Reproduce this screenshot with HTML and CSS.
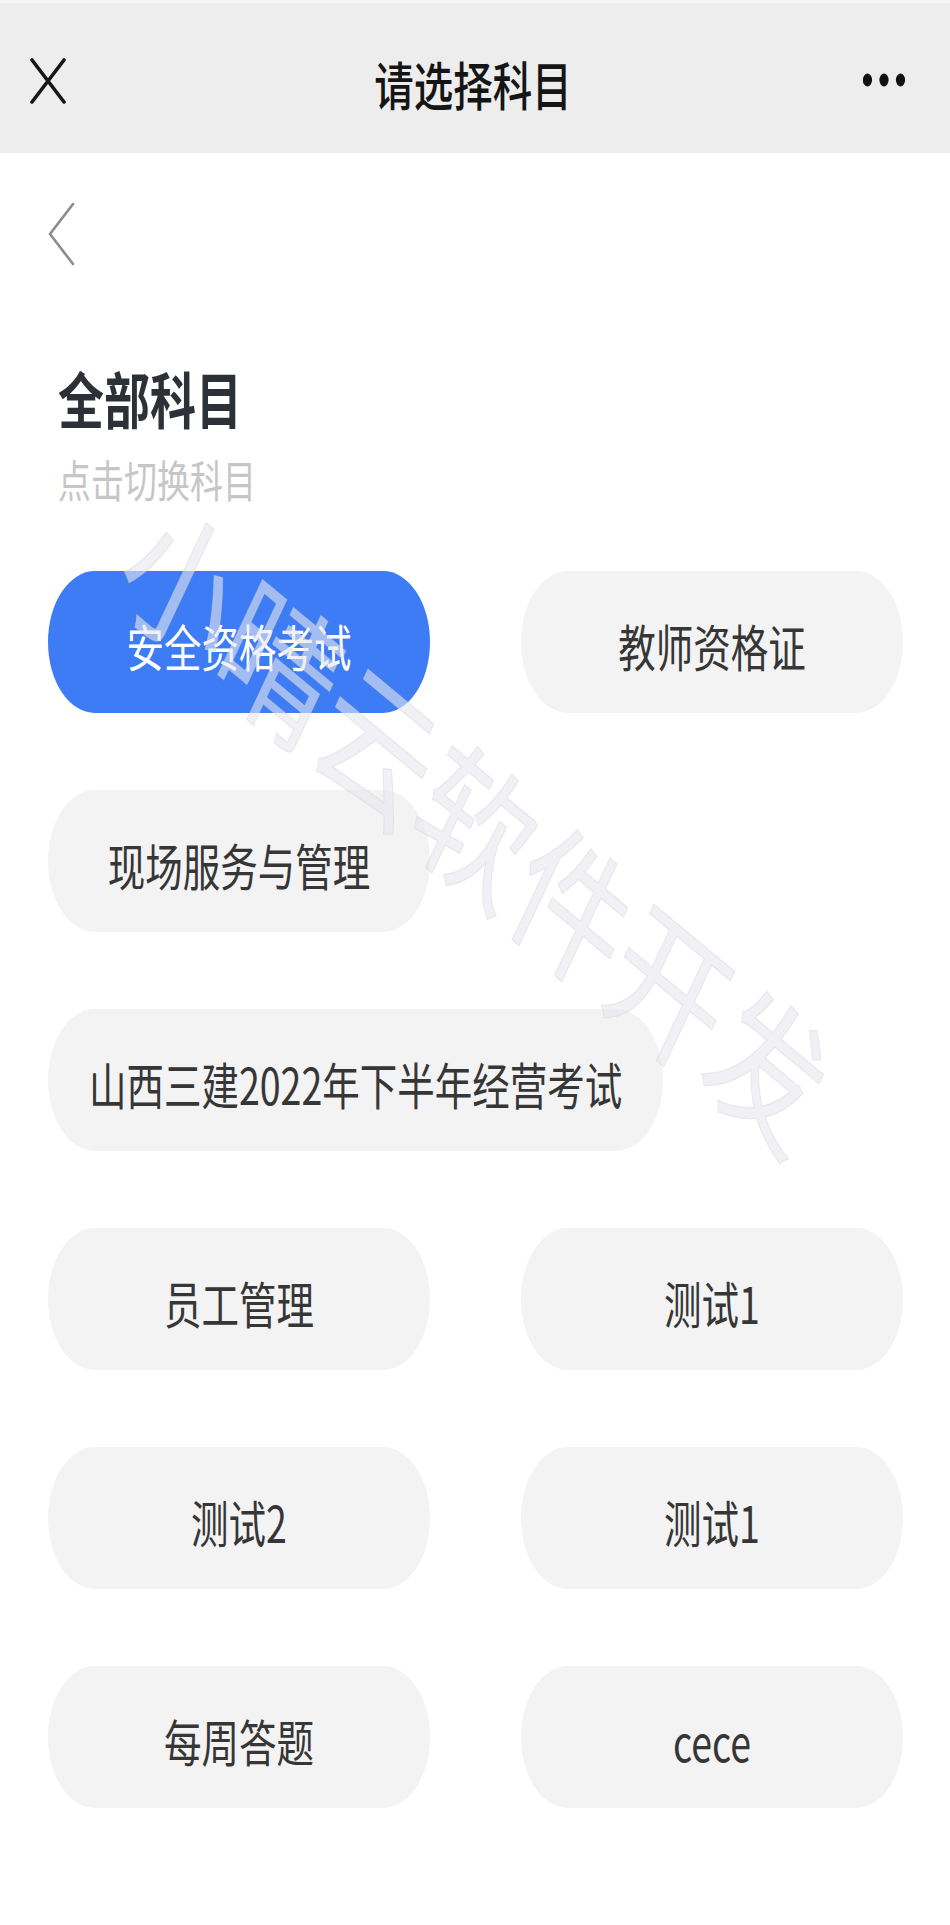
FILE: index.html
```html
<!DOCTYPE html>
<html lang="zh-CN">
<head>
<meta charset="utf-8">
<title>请选择科目</title>
<link rel="stylesheet" href="styles.css">
</head>
<body>
<header class="topbar">
  <svg class="close-icon" width="36" height="46" viewBox="0 0 36 46">
    <path d="M2 2 L34 44 M34 2 L2 44" stroke="#161616" stroke-width="3.6" stroke-linecap="round" fill="none"/>
  </svg>
  <div class="topbar-title"><span class="tall">请选择科目</span></div>
  <svg class="more-icon" width="46" height="16" viewBox="0 0 46 16">
    <ellipse cx="4.5" cy="8" rx="4.6" ry="6.5" fill="#111"/>
    <ellipse cx="21" cy="8" rx="4.6" ry="6.5" fill="#111"/>
    <ellipse cx="37.5" cy="8" rx="4.6" ry="6.5" fill="#111"/>
  </svg>
</header>

<main class="content">
  <div class="back-row">
    <svg class="back-icon" width="28" height="64" viewBox="0 0 28 64">
      <path d="M25 2 L2 32 L25 62" stroke="#8c8c8c" stroke-width="2.6" stroke-linecap="round" stroke-linejoin="round" fill="none"/>
    </svg>
  </div>

  <h1 class="section-title"><span class="tall">全部科目</span></h1>
  <p class="section-sub"><span class="tall">点击切换科目</span></p>

  <div class="subjects">
    <div class="chip chip-active"><span class="tall">安全资格考试</span></div>
    <div class="chip"><span class="tall">教师资格证</span></div>
    <div class="chip"><span class="tall">现场服务与管理</span></div>
    <div class="chip"><span class="tall">山西三建2022年下半年经营考试</span></div>
    <div class="chip"><span class="tall">员工管理</span></div>
    <div class="chip"><span class="tall">测试1</span></div>
    <div class="chip"><span class="tall">测试2</span></div>
    <div class="chip"><span class="tall">测试1</span></div>
    <div class="chip"><span class="tall">每周答题</span></div>
    <div class="chip"><span class="tall">cece</span></div>
  </div>
</main>

<div class="watermark-anchor">
  <div class="watermark">小晴云软件开发</div>
</div>
</body>
</html>
```

FILE: styles.css
```css
html, body {
  margin: 0;
  padding: 0;
  background: #ffffff;
}

body {
  position: relative;
  width: 950px;
  min-height: 1925px;
  font-family: "Noto Sans CJK SC", "Noto Sans", "Liberation Sans", sans-serif;
  color: #333333;
  overflow: hidden;
}

.tall {
  display: inline-block;
  transform: scaleY(1.33);
}

/* top bar */
.topbar {
  box-sizing: border-box;
  height: 153px;
  border-top: 3px solid #f6f6f6;
  background: #ededed;
  display: grid;
  grid-template-columns: 1fr auto 1fr;
  align-items: center;
  padding-top: 4px;
}

.close-icon {
  margin-left: 30px;
  margin-top: 2px;
  justify-self: start;
}

.topbar-title {
  font-size: 39.5px;
  line-height: 40px;
  font-weight: 500;
  color: #151515;
  padding-top: 6px;
  margin-right: 4px;
}

.more-icon {
  justify-self: end;
  margin-right: 41px;
}

/* content */
.content {
  padding: 0 47px 0 48px;
}

.back-row {
  padding-top: 49px;
  height: 64px;
}

.back-icon {
  display: block;
}

.section-title {
  margin: 108px 0 0 10px;
  font-size: 46px;
  line-height: 46px;
  font-weight: 700;
  color: #2c3137;
}

.section-sub {
  margin: 43px 0 0 10px;
  font-size: 33px;
  line-height: 32px;
  color: #c6c6c6;
}

.subjects {
  margin-top: 76px;
  display: flex;
  flex-wrap: wrap;
  gap: 77px 91px;
}

.chip {
  box-sizing: border-box;
  min-width: 382px;
  height: 142px;
  padding: 6px 41px 0;
  border-radius: 47px / 71px;
  background: #f3f3f3;
  color: #363636;
  font-size: 37.5px;
  display: flex;
  align-items: center;
  justify-content: center;
  white-space: nowrap;
}

.chip-active {
  background: #3d7cf5;
  color: #ffffff;
}

/* watermark */
.watermark-anchor {
  position: absolute;
  left: 478px;
  top: 820px;
  width: 0;
  height: 0;
  pointer-events: none;
}

.watermark {
  position: absolute;
  left: 0;
  top: 0;
  white-space: nowrap;
  font-size: 115px;
  line-height: 115px;
  font-weight: 400;
  color: rgba(232, 232, 238, 0.6);
  -webkit-text-stroke: 1px rgba(205, 205, 210, 0.35);
  transform: translate(-50%, -50%) scaleY(1.33) rotate(32deg);
}
```
